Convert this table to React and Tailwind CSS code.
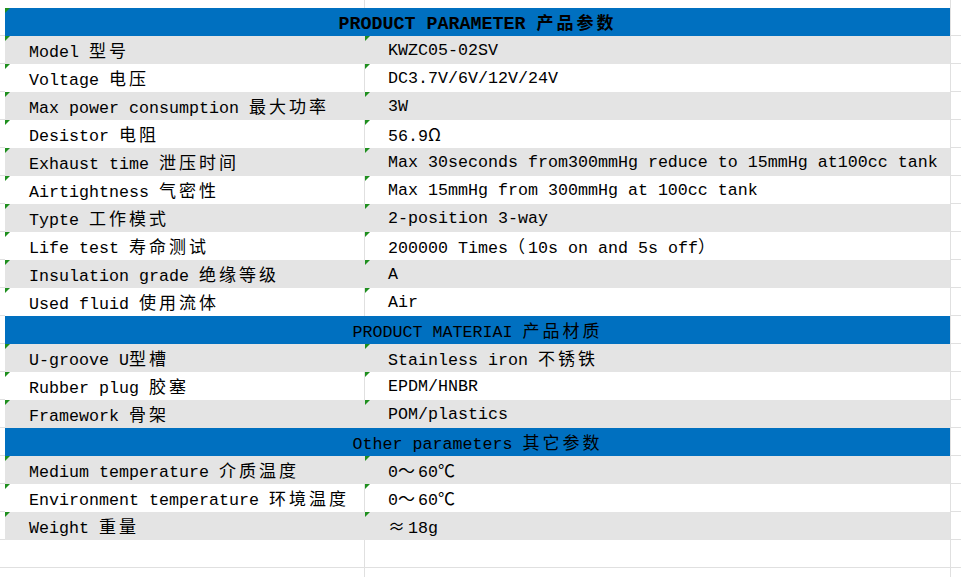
import React from "react";

const SECTIONS = [
  {
    title: "PRODUCT PARAMETER 产品参数",
    bold: true,
    rows: [
      ["Model 型号", "KWZC05-02SV"],
      ["Voltage 电压", "DC3.7V/6V/12V/24V"],
      ["Max power consumption 最大功率", "3W"],
      ["Desistor 电阻", "56.9Ω"],
      ["Exhaust time 泄压时间", "Max 30seconds from300mmHg reduce to 15mmHg at100cc tank"],
      ["Airtightness 气密性", "Max 15mmHg from 300mmHg at 100cc tank"],
      ["Typte 工作模式", "2-position 3-way"],
      ["Life test 寿命测试", "200000 Times（10s on and 5s off）"],
      ["Insulation grade 绝缘等级", "A"],
      ["Used fluid 使用流体", "Air"],
    ],
  },
  {
    title: "PRODUCT MATERIAI 产品材质",
    rows: [
      ["U-groove U型槽", "Stainless iron 不锈铁"],
      ["Rubber plug 胶塞", "EPDM/HNBR"],
      ["Framework 骨架", "POM/plastics"],
    ],
  },
  {
    title: "Other parameters 其它参数",
    rows: [
      ["Medium temperature 介质温度", "0～60℃"],
      ["Environment temperature 环境温度", "0～60℃"],
      ["Weight 重量", "≈18g"],
    ],
  },
];

function Txt({ s, bold }) {
  const parts = [];
  let buf = "";
  let k = 0;
  for (const ch of s) {
    if (ch.charCodeAt(0) > 0x7f) {
      if (buf) {
        parts.push(<span key={k++}>{buf}</span>);
        buf = "";
      }
      parts.push(
        <span
          key={k++}
          className={
            "inline-block w-[20px] font-['Noto_Sans_CJK_SC',sans-serif] " +
            (bold ? "text-[17px] font-bold" : "text-[17px] font-normal")
          }
        >
          {ch}
        </span>
      );
    } else {
      buf += ch;
    }
  }
  if (buf) parts.push(<span key={k++}>{buf}</span>);
  return <span className="whitespace-pre">{parts}</span>;
}

function Tri() {
  return (
    <span className="absolute left-0 top-0 w-0 h-0 border-t-[5px] border-r-[5px] border-t-[#1f8f1f] border-r-transparent" />
  );
}

function Gutter() {
  return <div className="w-[5px] shrink-0 border-b border-[#e0e0e0]" />;
}

function RightFill() {
  return <div className="flex-1 border-b border-l border-[#e0e0e0]" />;
}

function HeaderRow({ title, bold, tri }) {
  return (
    <div className="flex h-[28px]">
      <Gutter />
      <div className="relative w-[945px] shrink-0 bg-[#0070c0] flex items-center justify-center text-black">
        {tri && <Tri />}
        <div className={bold ? "text-[18.33px] font-bold pt-[4px]" : "text-[16.67px] pt-[3px]"}>
          <Txt s={title} bold={bold} />
        </div>
      </div>
      <RightFill />
    </div>
  );
}

function DataRow({ a, b, gray }) {
  return (
    <div className="flex h-[28px]">
      <Gutter />
      <div className={"flex w-[945px] shrink-0 " + (gray ? "bg-[#e4e4e4]" : "bg-white")}>
        <div
          className={
            "relative w-[360px] shrink-0 flex items-center pl-[24px] pt-[3px] " +
            (gray ? "" : "border-r border-[#e0e0e0]")
          }
        >
          <Tri />
          <Txt s={a} />
        </div>
        <div className="relative flex-1 flex items-center pl-[23px] pt-[3px]">
          <Tri />
          <Txt s={b} />
        </div>
      </div>
      <RightFill />
    </div>
  );
}

function EmptyRow({ h }) {
  return (
    <div className={"flex " + h}>
      <Gutter />
      <div className="w-[360px] shrink-0 border-r border-b border-[#e0e0e0]" />
      <div className="w-[585px] shrink-0 border-b border-[#e0e0e0]" />
      <RightFill />
    </div>
  );
}

export default function App() {
  return (
    <div className="w-[961px] h-[577px] overflow-hidden bg-white text-black text-[16.67px] leading-none font-['Liberation_Mono','Noto_Sans_CJK_SC',monospace]">
      <div className="flex h-[8px]">
        <div className="w-[5px] shrink-0" />
        <div className="w-[360px] shrink-0 border-r border-[#e0e0e0]" />
        <div className="w-[585px] shrink-0" />
        <div className="flex-1 border-l border-[#e0e0e0]" />
      </div>
      {SECTIONS.map((sec, si) => (
        <React.Fragment key={si}>
          <HeaderRow title={sec.title} bold={sec.bold} tri={si === 0} />
          {sec.rows.map((r, i) => (
            <DataRow key={i} a={r[0]} b={r[1]} gray={i % 2 === 0} />
          ))}
        </React.Fragment>
      ))}
      <EmptyRow h="h-[28px]" />
      <EmptyRow h="h-[28px]" />
    </div>
  );
}
